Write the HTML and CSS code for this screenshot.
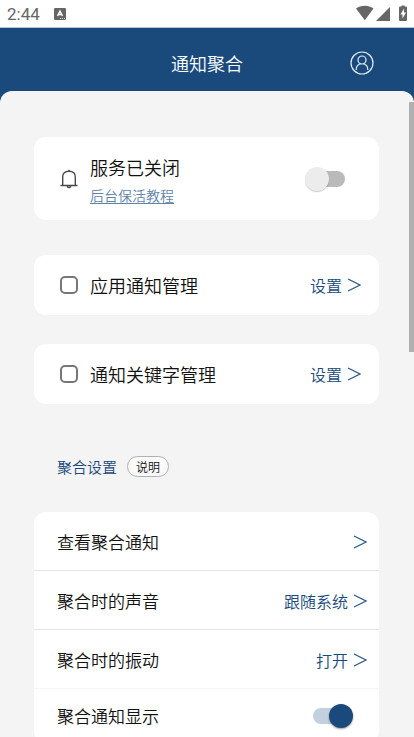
FILE: index.html
```html
<!DOCTYPE html>
<html lang="zh-CN">
<head>
<meta charset="utf-8">
<meta name="viewport" content="width=device-width, initial-scale=1">
<title>通知聚合</title>
<link rel="stylesheet" href="styles.css">
</head>
<body>
<div class="app">
  <div class="status">
    <span class="clock">2:44</span>
    <svg class="status-app" viewBox="0 0 12 12" width="12" height="12" aria-hidden="true">
      <rect width="12" height="12" rx="1" fill="#666"/>
      <path d="M3.500 8 6 3l2.500 5M4.500 6.500h3" fill="none" stroke="#fff" stroke-width="1.400"/>
      <path d="M6 10.500h1M8 10.500h1M10 10.500h1" stroke="#ddd"/>
    </svg>
    <svg class="status-icons" viewBox="0 0 53 17" width="53" height="17" aria-hidden="true">
      <path d="M1 3.500C6-.2 13.500-.2 18.500 3.500L9.800 15.300z" fill="#666"/>
      <path d="M35 2v14H21z" fill="#666"/>
      <path d="M46.500 1.500V.5h3v1H51q1 0 1 1V15q0 1-1 1h-6q-1 0-1-1V2.500q0-1 1-1z" fill="#666"/>
      <path d="M49 3.500 45.500 9.500h2v4L51 7.500h-2z" fill="#fff"/>
    </svg>
  </div>

  <header class="header">
    <h1 class="title">通知聚合</h1>
    <button class="profile" type="button" aria-label="我的">
      <svg viewBox="0 0 24 24" width="24" height="24" fill="none" stroke="#e6edf5" stroke-width="1.200" stroke-linecap="round">
        <circle cx="12" cy="12" r="11"/>
        <circle cx="12" cy="9" r="4"/>
        <path d="M6.200 18.500c0-3.400 1.700-5 4.300-5.800M17.800 18.500c0-3.400-1.700-5-4.300-5.800"/>
      </svg>
    </button>
  </header>

  <main class="panel">
    <section class="card card-service">
      <svg class="bell" viewBox="0 0 18 20" width="18" height="20" fill="none" stroke="#4a4a4a" stroke-width="1.400" stroke-linejoin="round" aria-hidden="true">
        <path d="M2.700 16V8C2.700 4.500 5.200 2.200 9 2.200S15.300 4.500 15.300 8v8M.5 16.500h17"/>
        <path d="M9 2.200V.8M7 17.200q2 2.600 4 0"/>
      </svg>
      <div class="service-text">
        <label class="card-title" for="service">服务已关闭</label>
        <a class="guide" href="#guide">后台保活教程</a>
      </div>
      <input class="switch switch-service" type="checkbox" id="service">
    </section>

    <section class="card card-manage">
      <input class="tick" type="checkbox" id="apps">
      <label class="card-title" for="apps">应用通知管理</label>
      <button class="action" type="button">设置
        <svg class="arrow" viewBox="0 0 14 14" width="14" height="14"><path d="M1 1l12 6-12 6"/></svg>
      </button>
    </section>

    <section class="card card-manage">
      <input class="tick" type="checkbox" id="keywords">
      <label class="card-title" for="keywords">通知关键字管理</label>
      <button class="action" type="button">设置
        <svg class="arrow" viewBox="0 0 14 14" width="14" height="14"><path d="M1 1l12 6-12 6"/></svg>
      </button>
    </section>

    <div class="section-head">
      <h2 class="section-title">聚合设置</h2>
      <button class="help" type="button">说明</button>
    </div>

    <section class="list">
      <div class="row">
        <span class="row-label">查看聚合通知</span>
        <button class="action" type="button" aria-label="查看聚合通知">
          <svg class="arrow" viewBox="0 0 14 14" width="14" height="14"><path d="M1 1l12 6-12 6"/></svg>
        </button>
      </div>
      <div class="row">
        <span class="row-label">聚合时的声音</span>
        <button class="action" type="button">跟随系统
          <svg class="arrow" viewBox="0 0 14 14" width="14" height="14"><path d="M1 1l12 6-12 6"/></svg>
        </button>
      </div>
      <div class="row row-faint">
        <span class="row-label">聚合时的振动</span>
        <button class="action" type="button">打开
          <svg class="arrow" viewBox="0 0 14 14" width="14" height="14"><path d="M1 1l12 6-12 6"/></svg>
        </button>
      </div>
      <div class="row row-switch">
        <label class="row-label" for="display">聚合通知显示</label>
        <input class="switch" type="checkbox" id="display" checked>
      </div>
    </section>
  </main>
  <div class="scroll-thumb"></div>
</div>
</body>
</html>
```

FILE: styles.css
```css
* {
  box-sizing: border-box;
}

body {
  margin: 0;
  font-family: "Noto Sans CJK SC", sans-serif;
  font-weight: 350;
  color: #111;
  background: #1a497c;
}

button {
  padding: 0;
  border: 0;
  background: none;
  font: inherit;
  color: inherit;
}

.app {
  position: relative;
  display: flex;
  flex-direction: column;
  height: 100vh;
  overflow: hidden;
}

.status {
  display: flex;
  flex: none;
  align-items: center;
  height: 28px;
  padding: 0 6px 0 7px;
  background: #fff;
  border-bottom: 1px solid #b4c3d4;
}

.clock {
  font: 400 17px/28px Roboto, sans-serif;
  color: #666;
}

.status-app {
  margin-left: 14px;
}

.status-icons {
  margin-left: auto;
}

.header {
  display: grid;
  grid-template-columns: 1fr auto 1fr;
  flex: none;
  align-items: center;
  height: 63px;
  padding: 6px 40px 0;
}

.title {
  grid-column: 2;
  margin: 0;
  font-size: 18px;
  line-height: 28px;
  font-weight: 350;
  color: #fff;
}

.profile {
  justify-self: end;
  height: 24px;
}

.profile svg,
.arrow {
  display: block;
}

.panel {
  flex: 1;
  min-height: 0;
  padding: 46px 35px 40px 34px;
  overflow-y: auto;
  scrollbar-width: none;
  background: #f4f4f4;
  border-radius: 12px 12px 0 0;
}

.card {
  display: flex;
  align-items: center;
  background: #fff;
  border-radius: 12px;
}

.card-service {
  height: 83px;
  margin-bottom: 35px;
  padding: 0 34px 0 26px;
}

.card-manage {
  height: 60px;
  margin-bottom: 29px;
  padding: 0 18px 0 26px;
}

.bell {
  flex: none;
  margin-right: 12px;
}

.service-text {
  display: flex;
  flex-direction: column;
  align-items: flex-start;
}

.card-title {
  font-size: 18px;
  line-height: 32px;
}

.guide {
  font-size: 14px;
  line-height: 24px;
  color: #5f84ab;
  text-underline-offset: 2px;
}

.tick {
  appearance: none;
  flex: none;
  width: 18px;
  height: 18px;
  margin: 0 12px 0 0;
  border: 2px solid #777;
  border-radius: 5px;
}

.action {
  display: flex;
  align-items: center;
  gap: 5px;
  margin-left: auto;
  font-size: 16px;
  line-height: 24px;
  color: #1a497c;
}

.arrow path {
  fill: none;
  stroke: #2c5a8c;
  stroke-width: 1.3;
}

.switch {
  appearance: none;
  position: relative;
  flex: none;
  width: 40px;
  height: 24px;
  margin: 0 0 0 auto;
}

.switch::before {
  content: "";
  position: absolute;
  top: 4px;
  right: 0;
  width: 34px;
  height: 16px;
  border-radius: 8px;
  background: #bababa;
}

.switch::after {
  content: "";
  position: absolute;
  top: 0;
  left: 0;
  width: 24px;
  height: 24px;
  border-radius: 50%;
  background: #ececec;
  box-shadow: 0 1px 1px #0003;
}

.switch:checked::before {
  right: auto;
  left: 0;
  background: #c3d0de;
}

.switch:checked::after {
  left: 16px;
  background: #1a497c;
  box-shadow: 0 1px 2px #0006;
}

.section-head {
  display: flex;
  align-items: center;
  gap: 10px;
  margin: 52px 0 35px;
  padding-left: 23px;
}

.section-title {
  margin: 0;
  font-size: 15px;
  line-height: 21px;
  font-weight: 350;
  color: #1a497c;
}

.help {
  height: 21px;
  padding: 0 8px;
  border: 1px solid #b0b0b0;
  border-radius: 11px;
  background: #fafafa;
  font-size: 12px;
  line-height: 19px;
}

.list {
  background: #fff;
  border-radius: 12px;
}

.row {
  display: flex;
  align-items: center;
  height: 59px;
  padding: 2px 12px 0 23px;
  border-bottom: 1px solid #e6e6e6;
}

.row-faint {
  border-color: #f7f7f7;
}

.row-switch {
  height: 54px;
  padding: 0 26px 0 23px;
  border-bottom: 0;
}

.row-label {
  font-size: 17px;
  line-height: 28px;
}

.scroll-thumb {
  position: absolute;
  top: 102px;
  right: 0;
  width: 5px;
  height: 250px;
  background: #b0b0b0;
}
```
